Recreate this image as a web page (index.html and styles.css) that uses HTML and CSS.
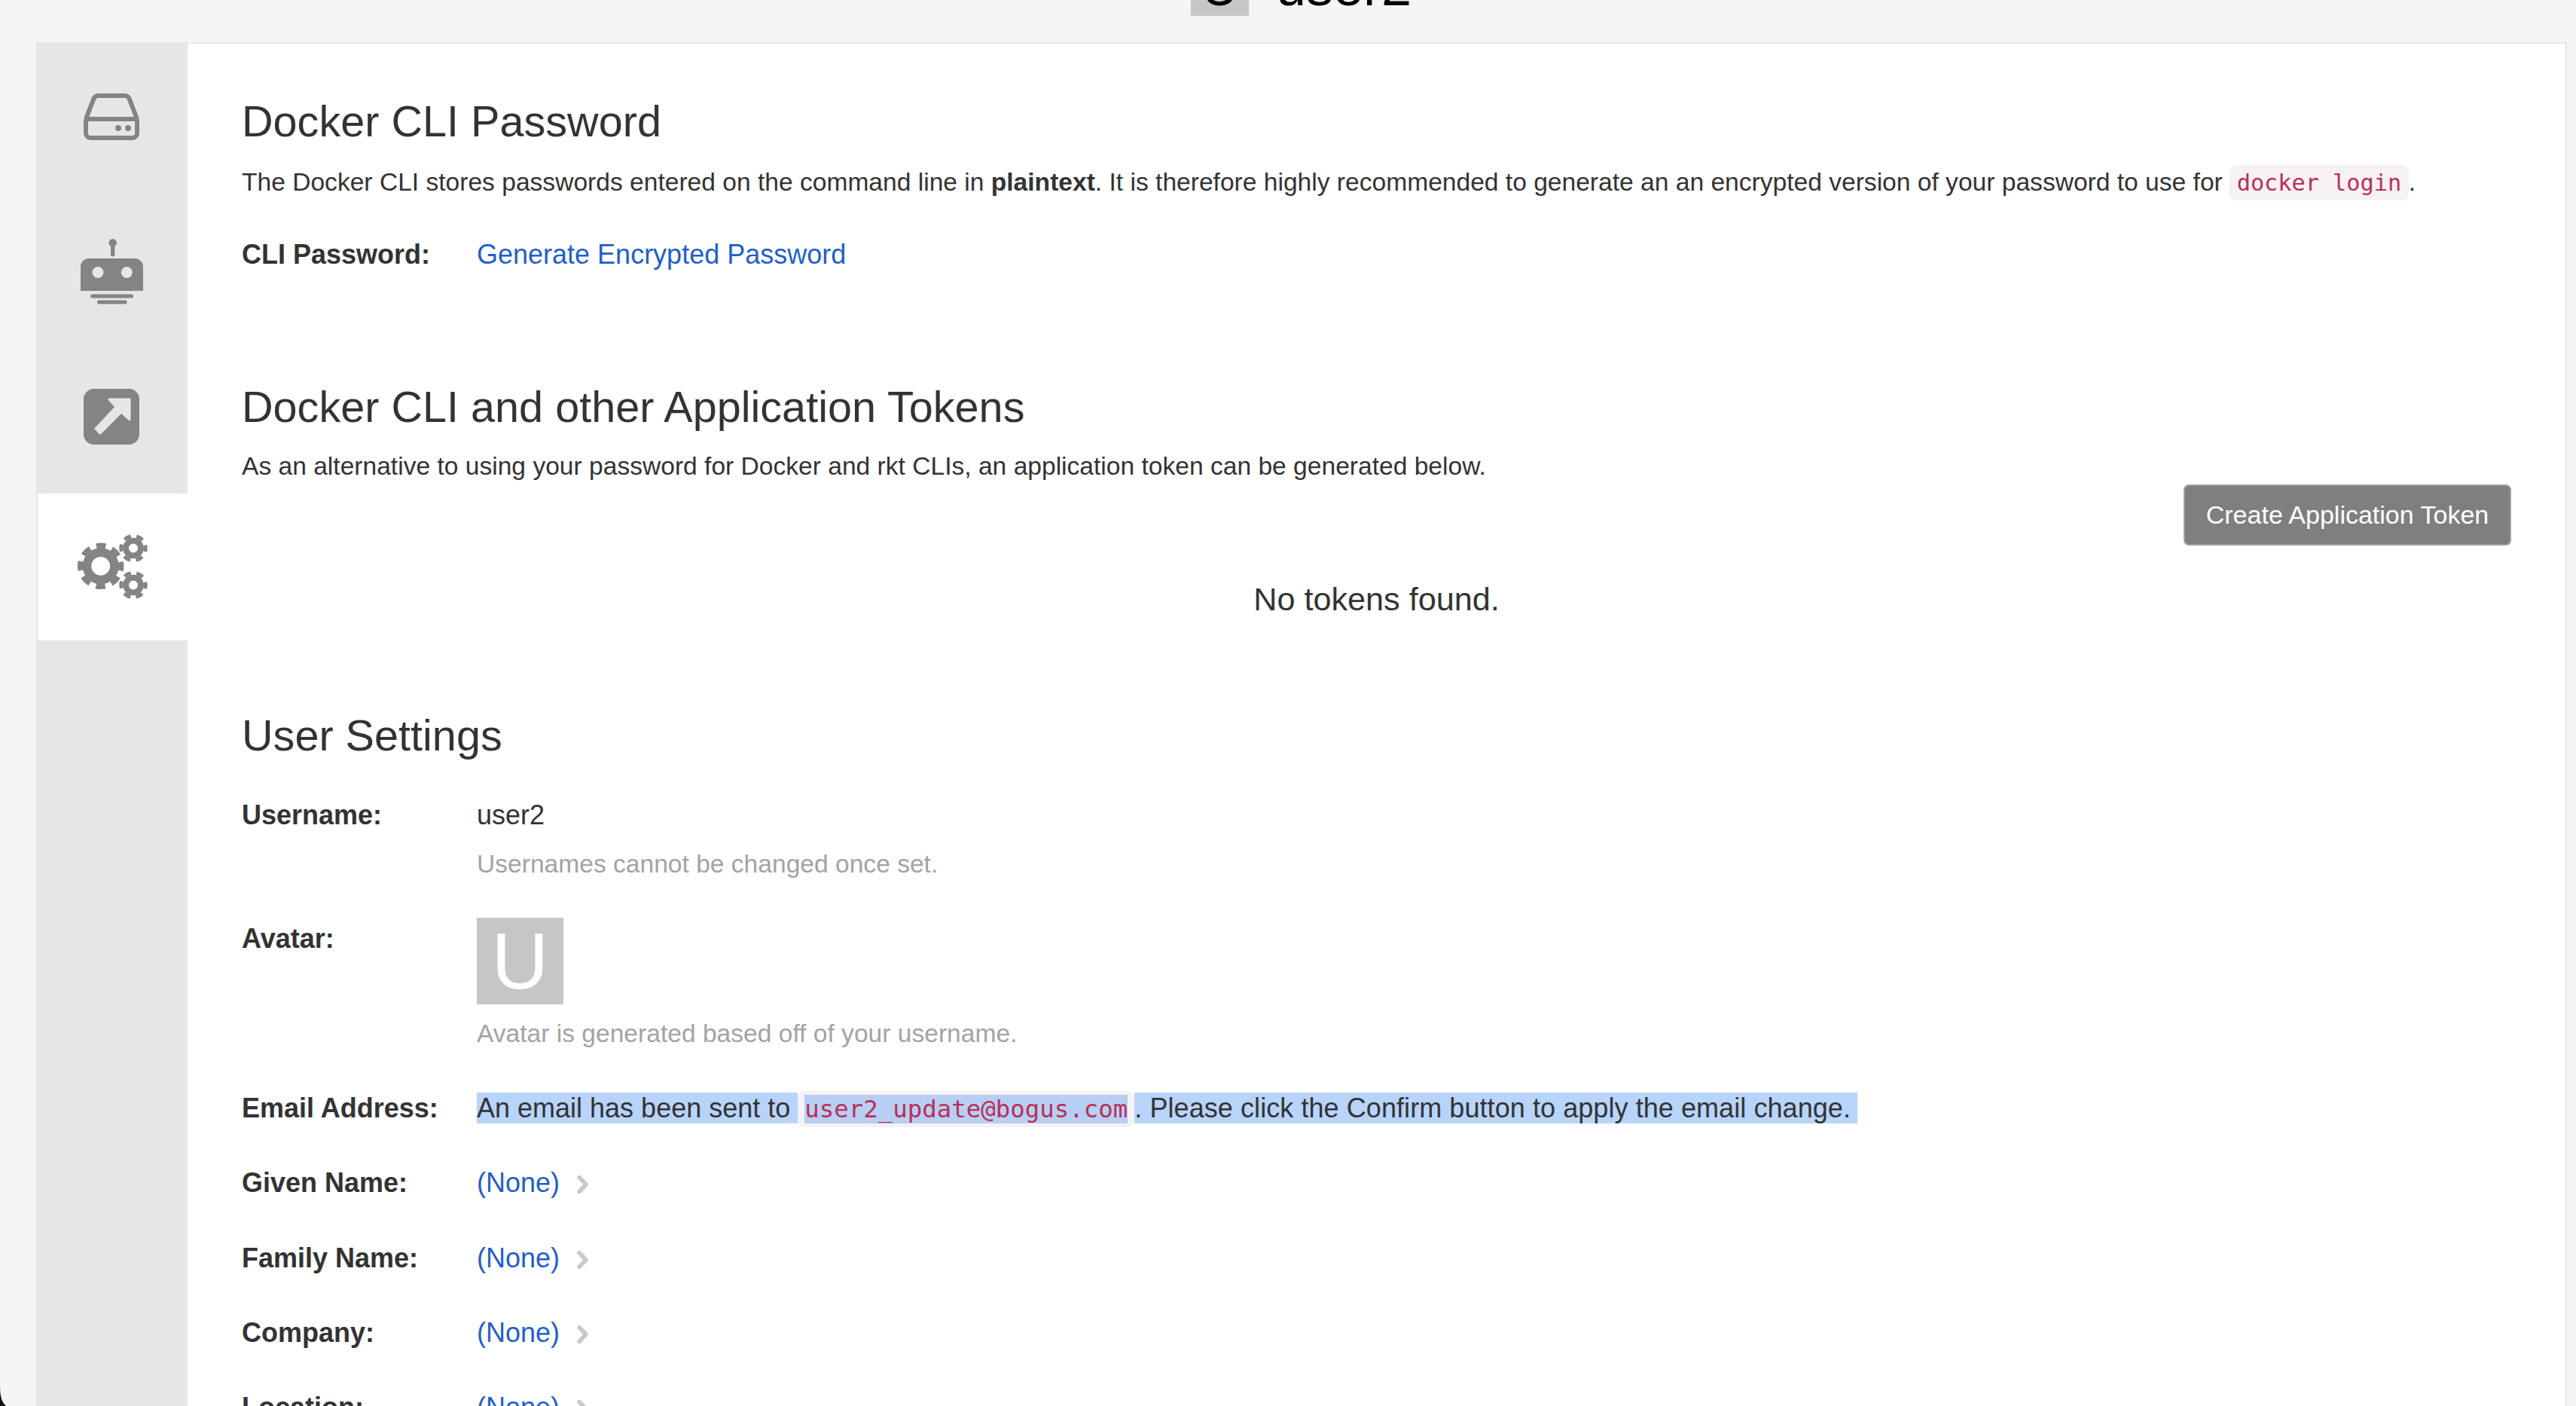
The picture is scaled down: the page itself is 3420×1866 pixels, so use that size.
FILE: index.html
```html
<!DOCTYPE html>
<html lang="en">
<head>
<meta charset="utf-8">
<title>user2</title>
<link rel="stylesheet" href="styles.css">
</head>
<body>
<header class="page-header">
  <div class="avatar avatar-small"><span class="avatar-letter-small">U</span></div>
  <div class="page-title">user2</div>
</header>
<div class="panel">
  <nav class="sidebar">
    <div class="tab tab-repos">
      <svg class="icon-drive" viewBox="0 0 74 62" width="74" height="62">
        <path class="line" d="M3 34v19a6 6 0 0 0 6 6h56a6 6 0 0 0 6-6V34M3 34 13 8a7 7 0 0 1 6-5h36a7 7 0 0 1 6 5l10 26M3 34h68"/>
        <circle class="solid" cx="46" cy="46" r="4"/>
        <circle class="solid" cx="59" cy="46" r="4"/>
      </svg>
    </div>
    <div class="tab tab-robots">
      <svg class="icon-robot" viewBox="0 0 83 87" width="83" height="87">
        <circle class="solid" cx="42.7" cy="5.3" r="5.3"/>
        <rect class="solid" x="40" y="6" width="5.4" height="17.5" rx="2.7"/>
        <path class="solid" fill-rule="evenodd" d="M0 69V37a11 11 0 0 1 11-11h61a11 11 0 0 1 11 11v32ZM23 37a7.5 7.5 0 1 0 0 15 7.5 7.5 0 0 0 0-15ZM61.3 37a7.5 7.5 0 1 0 0 15 7.5 7.5 0 0 0 0-15Z"/>
        <rect class="solid" x="13.3" y="73.5" width="56.7" height="5" rx="2.5"/>
        <rect class="solid" x="22" y="81.5" width="39.5" height="5" rx="2.5"/>
      </svg>
    </div>
    <div class="tab tab-apps">
      <svg class="icon-arrow" viewBox="0 0 74 74" width="74" height="74">
        <rect class="solid" width="74" height="74" rx="14"/>
        <path class="arrow-cut" d="M34 14H61V41L50 31 22 59 16 53 43 24Z"/>
      </svg>
    </div>
    <div class="tab tab-settings tab-active">
      <svg class="icon-gears" viewBox="0 0 93 86" width="93" height="86">
        <circle class="gear-ring" cx="30.7" cy="42.3" r="18.2" stroke-width="11.6"/>
        <circle class="gear-teeth" cx="30.7" cy="42.3" r="27" stroke-width="7.4" stroke-dasharray="12.6 8.6" stroke-dashoffset="6.3"/>
        <circle class="gear-ring" cx="74" cy="18.5" r="9.9" stroke-width="7.8"/>
        <circle class="gear-teeth" cx="74" cy="18.5" r="16.2" stroke-width="5" stroke-dasharray="9.4 7.56" stroke-dashoffset="4.7"/>
        <circle class="gear-ring" cx="74" cy="67.5" r="9.9" stroke-width="7.8"/>
        <circle class="gear-teeth" cx="74" cy="67.5" r="16.2" stroke-width="5" stroke-dasharray="9.4 7.56" stroke-dashoffset="4.7"/>
      </svg>
    </div>
  </nav>
  <main class="content">
    <h3 class="heading heading-first">Docker CLI Password</h3>
    <p class="desc">The Docker CLI stores passwords entered on the command line in <b>plaintext</b>. It is therefore highly recommended to generate an an encrypted version of your password to use for <code class="code">docker login</code>.</p>
    <div class="row row-cli">
      <div class="label">CLI Password:</div>
      <div class="value"><a class="link" href="#">Generate Encrypted Password</a></div>
    </div>

    <h3 class="heading heading-tokens">Docker CLI and other Application Tokens</h3>
    <p class="desc desc-tokens">As an alternative to using your password for Docker and rkt CLIs, an application token can be generated below.</p>
    <div class="actions"><button class="btn" type="button">Create Application Token</button></div>
    <div class="empty">No tokens found.</div>

    <h3 class="heading heading-settings">User Settings</h3>
    <div class="row row-username">
      <div class="label">Username:</div>
      <div class="value">user2<div class="help help-username">Usernames cannot be changed once set.</div></div>
    </div>
    <div class="row row-avatar">
      <div class="label label-avatar">Avatar:</div>
      <div class="value">
        <div class="avatar avatar-large">U</div>
        <div class="help help-avatar">Avatar is generated based off of your username.</div>
      </div>
    </div>
    <div class="row row-email">
      <div class="label">Email Address:</div>
      <div class="value"><span class="sel">An email has been sent to&nbsp;</span><code class="code code-email"><span class="sel-code">user2_update@bogus.com</span></code><span class="sel sel-end">. Please click the Confirm button to apply the email change.</span></div>
    </div>
    <div class="row row-field">
      <div class="label">Given Name:</div>
      <div class="value"><a class="link" href="#">(None)</a><svg class="chevron" viewBox="0 0 16 24" width="16" height="24"><path d="M3 2.5 12 12 3 21.5"/></svg></div>
    </div>
    <div class="row row-field">
      <div class="label">Family Name:</div>
      <div class="value"><a class="link" href="#">(None)</a><svg class="chevron" viewBox="0 0 16 24" width="16" height="24"><path d="M3 2.5 12 12 3 21.5"/></svg></div>
    </div>
    <div class="row row-field">
      <div class="label">Company:</div>
      <div class="value"><a class="link" href="#">(None)</a><svg class="chevron" viewBox="0 0 16 24" width="16" height="24"><path d="M3 2.5 12 12 3 21.5"/></svg></div>
    </div>
    <div class="row row-field">
      <div class="label">Location:</div>
      <div class="value"><a class="link" href="#">(None)</a><svg class="chevron" viewBox="0 0 16 24" width="16" height="24"><path d="M3 2.5 12 12 3 21.5"/></svg></div>
    </div>
  </main>
</div>
<svg class="window-corner" viewBox="0 0 8 28" width="8" height="28"><path d="M0 0C0 12 1 22 8 28H0Z"/></svg>
</body>
</html>
```
FILE: styles.css
```css
* { box-sizing: border-box; }
html, body { height: 1866px; }
body {
  margin: 0;
  overflow: hidden;
  position: relative;
  background: #f5f5f5;
  color: #333;
  font-family: "Liberation Sans", Arial, sans-serif;
  font-size: 33.6px;
  line-height: 48px;
}

.page-header {
  height: 56px;
  overflow: hidden;
  display: flex;
  justify-content: center;
  align-items: flex-end;
  gap: 36px;
  padding: 0 0 35px 35px;
}
.page-title {
  flex: none;
  font-size: 72px;
  line-height: 72px;
  margin-bottom: 3px;
  color: #000;
}
.avatar {
  flex: none;
  background: #c6c6c6;
  display: flex;
  align-items: center;
  justify-content: center;
  text-align: center;
}
.avatar-small { width: 77px; height: 77px; color: #000; font-size: 70px; line-height: 70px; }
.avatar-letter-small { display: block; }
.avatar-large { width: 115px; height: 115px; color: #fff; font-size: 105px; line-height: 115px; }

.panel {
  display: flex;
  height: 1810px;
  margin: 0 12px 0 48px;
  background: #fff;
  border-top: 2px solid #e6e6e6;
  border-right: 2px solid #e6e6e6;
}

.sidebar {
  flex: none;
  width: 201px;
  margin-top: -2px;
  background: #e6e6e6;
  border-right: 1px solid #dfe4e8;
}
.tab {
  display: flex;
  justify-content: center;
  align-items: flex-start;
  border-bottom: 2px solid #e1e6ea;
}
.tab-repos { height: 200px; padding-top: 68px; }
.tab-robots { height: 197px; padding-top: 61px; }
.tab-apps { height: 202px; padding-top: 63px; }
.tab-settings { height: 197px; padding-top: 54px; }
.tab-active {
  margin-left: 2px;
  margin-right: -1px;
  background: #fff;
}

.line { fill: none; stroke: #848484; stroke-width: 6; stroke-linejoin: round; }
.solid { fill: #848484; }
.arrow-cut { fill: #e6e6e6; stroke: #e6e6e6; stroke-width: 3; stroke-linejoin: round; }
.gear-ring, .gear-teeth { fill: none; stroke: #848484; }

.content {
  flex: 1;
  min-width: 0;
  padding: 72px 72px 0 72px;
}
.heading {
  margin: 0;
  font-size: 57.6px;
  line-height: 63.4px;
  font-weight: 400;
}
.desc { margin: 25px 0 0; }
.desc-tokens { margin-top: 22px; }
.heading-tokens { margin-top: 147px; }
.heading-settings { margin-top: 119px; }

.row { display: flex; font-size: 36px; }
.row-cli { margin-top: 48px; }
.row-username { margin-top: 50px; }
.row-avatar { margin-top: 47px; }
.row-email { margin-top: 51px; }
.row-field { margin-top: 51.2px; }
.label { flex: none; width: 312px; font-weight: 700; }
.label-avatar { padding-top: 4px; }
.value { flex: 1; min-width: 0; white-space: nowrap; }
.help { color: #a3a3a3; font-size: 33.6px; }
.help-username { margin-top: 17px; }
.help-avatar { margin-top: 15px; }

.link { color: #1f5fc9; text-decoration: none; }
.code {
  font-family: "DejaVu Sans Mono", "Liberation Mono", monospace;
  font-size: 30.24px;
  line-height: 35px;
  color: #b93054;
  background: #f6f1f4;
  border-radius: 9.6px;
  padding: 6px 9.6px;
}
.code-email { font-size: 32.4px; padding: 5px 9px; }
.sel { background: #b8d4fb; }
.sel-end { padding-right: 9px; letter-spacing: 0.07px; }
.sel-code { background: #b7cff5; }

.actions { display: flex; justify-content: flex-end; }
.btn {
  width: 435px;
  height: 81px;
  padding: 0;
  background: #7f7f7f;
  border: 2px solid #a0a0a0;
  border-radius: 7px;
  color: #fff;
  font: inherit;
  font-size: 34px;
  line-height: 48px;
}
.empty {
  margin-top: 40px;
  text-align: center;
  font-size: 43.2px;
  line-height: 62px;
}
.chevron {
  margin-left: 23px;
  vertical-align: -2px;
  fill: none;
  stroke: #c9c9c9;
  stroke-width: 5.5;
  stroke-linecap: round;
  stroke-linejoin: round;
}
.window-corner {
  position: absolute;
  left: 0;
  bottom: 0;
  fill: #0a120a;
}
```
